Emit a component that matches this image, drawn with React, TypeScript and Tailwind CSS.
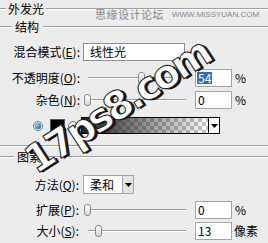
import React from 'react';

function Etch({ className = '' }: { className?: string }) {
  return <div className={`h-[2px] border-t border-[#a0a0a0] bg-white ${className}`} />;
}

function Slider({ thumb }: { thumb: number }) {
  return (
    <div className="relative ml-[8px] flex h-[12px] w-[98px] items-center">
      <div className="h-[2px] w-full border-t border-[#9a9a9a] bg-white" />
      <div
        className="absolute top-0 h-[12px] w-[7px] rounded-[3px] border border-[#8c8c8c] bg-[linear-gradient(#ffffff,#d6d6d6)]"
        style={{ left: thumb }}
      />
    </div>
  );
}

function Field({ children, selected }: { children: React.ReactNode; selected?: boolean }) {
  return (
    <div className="ml-[9px] flex h-[18px] w-[37px] items-center border border-[#a5a5a5] bg-white pl-[1px]">
      {selected ? (
        <span className="bg-[#316ac5] px-[1px] leading-[12px] text-white">{children}</span>
      ) : (
        <span className="pl-[1px]">{children}</span>
      )}
    </div>
  );
}

function Arrow() {
  return (
    <svg width="7" height="4" viewBox="0 0 7 4">
      <polygon points="0,0 7,0 3.5,4" fill="#000" />
    </svg>
  );
}

function Radio({ checked, className = '' }: { checked?: boolean; className?: string }) {
  return (
    <div
      className={`flex h-[10px] w-[10px] items-center justify-center rounded-full border border-[#6d7b8a] bg-[#e4e8ee] ${className}`}
    >
      {checked && <div className="h-[6px] w-[6px] rounded-full bg-[radial-gradient(circle_at_35%_35%,#9fd0ef,#2b6ea0_70%)]" />}
    </div>
  );
}

export default function App() {
  return (
    <div className="relative h-[243px] w-[268px] overflow-hidden bg-[#ececec] font-['Noto_Sans_CJK_SC','Noto_Sans',sans-serif] text-[12px] leading-none text-black">
      {/* 外发光 */}
      <div className="flex h-[17px] items-center">
        <Etch className="w-[6px]" />
        <span className="mx-[2px]">外发光</span>
        <Etch className="flex-1" />
      </div>

      {/* 结构 */}
      <div className="mt-[1px] flex h-[18px] items-center">
        <Etch className="w-[12px]" />
        <span className="ml-[3px] mr-[4px]">结构</span>
        <Etch className="flex-1" />
      </div>

      <div className="mt-[7px] flex h-[18px] items-center">
        <span className="w-[80px] text-right">
          混合模式(<u>E</u>):
        </span>
        <div className="ml-[3px] flex h-[18px] w-[102px] items-center border border-[#8f8f8f] bg-white pl-[6px]">
          线性光
        </div>
      </div>

      <div className="mt-[7px] flex h-[19px] items-center">
        <span className="w-[80px] text-right">
          不透明度(<u>O</u>):
        </span>
        <Slider thumb={50} />
        <Field selected>54</Field>
        <span className="ml-[3px]">%</span>
      </div>

      <div className="mt-[4px] flex h-[18px] items-center">
        <span className="w-[80px] text-right">
          杂色(<u>N</u>):
        </span>
        <Slider thumb={-4} />
        <Field>0</Field>
        <span className="ml-[3px]">%</span>
      </div>

      <div className="mt-[8px] flex h-[17px] items-center pl-[33px]">
        <Radio checked />
        <div className="ml-[7px] h-[14px] w-[15px] border border-[#555] bg-black" />
        <Radio className="ml-[3px]" />
        <div className="ml-[3px] flex h-[17px] border border-black">
          <div className="w-[126px] bg-[linear-gradient(to_right,#222,rgba(0,0,0,0)),repeating-conic-gradient(#c4c4c4_0%_25%,#ffffff_0%_50%)] [background-size:100%_100%,8px_8px]" />
          <div className="flex w-[11px] items-center justify-center border-l border-black bg-white">
            <Arrow />
          </div>
        </div>
      </div>

      <Etch className="mt-[11px]" />

      {/* 图素 */}
      <div className="mt-[1px] flex h-[17px] items-center">
        <Etch className="w-[14px]" />
        <span className="ml-[3px] mr-[3px]">图素</span>
        <Etch className="flex-1" />
      </div>

      <div className="mt-[10px] flex h-[19px] items-center">
        <span className="w-[79px] text-right">
          方法(<u>Q</u>):
        </span>
        <div className="ml-[4px] flex h-[19px] w-[51px] border border-[#a5a5a5] bg-white">
          <span className="flex flex-1 items-center pl-[6px]">柔和</span>
          <span className="flex w-[11px] items-center justify-center border-l border-[#a5a5a5] bg-[#e2e2e2]">
            <Arrow />
          </span>
        </div>
      </div>

      <div className="mt-[7px] flex h-[17px] items-center">
        <span className="w-[79px] text-right">
          扩展(<u>P</u>):
        </span>
        <div className="ml-[1px]" />
        <Slider thumb={-4} />
        <Field>0</Field>
        <span className="ml-[3px]">%</span>
      </div>

      <div className="mt-[4px] flex h-[17px] items-center">
        <span className="w-[79px] text-right">
          大小(<u>S</u>):
        </span>
        <div className="ml-[1px]" />
        <Slider thumb={7} />
        <Field>13</Field>
        <span className="ml-[2px]">像素</span>
      </div>

      {/* site watermarks */}
      <div className="absolute left-[95px] top-[9px] flex items-center text-[#8a8a8a]">
        <span className="text-[11px] tracking-[0.5px]">思缘设计论坛</span>
        <span className="ml-[8px] font-['Liberation_Sans',sans-serif] text-[8px]">WWW.MISSYUAN.COM</span>
      </div>
      <div className="absolute left-[117px] top-[106px] -translate-x-1/2 -translate-y-1/2 rotate-[-33deg] whitespace-nowrap font-['DejaVu_Sans',sans-serif] text-[39px] font-bold tracking-[-3px] text-white [-webkit-text-stroke:1px_#1a1a1a] [text-shadow:2px_2px_0_#111]">
        17ps8.com
      </div>
    </div>
  );
}
